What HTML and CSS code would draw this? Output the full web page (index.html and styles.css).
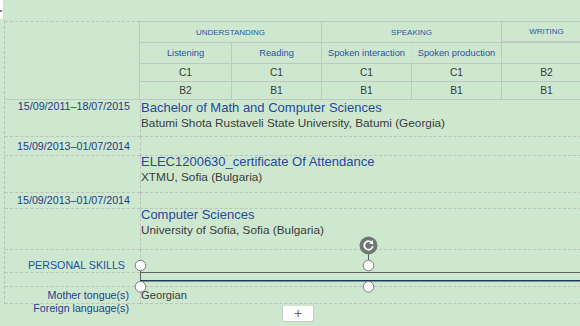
FILE: index.html
```html
<!DOCTYPE html>
<html>
<head>
  <title>Europass CV editor</title>
  <link rel="stylesheet" href="styles.css">
</head>
<body>
  <div class="stub"><span></span></div>

  <div class="cv">
    <div class="left lang-left"></div>
    <div class="lang">
      <div class="lh span2">UNDERSTANDING</div>
      <div class="lh span2">SPEAKING</div>
      <div class="lh writing">WRITING</div>
      <div class="sh">Listening</div>
      <div class="sh">Reading</div>
      <div class="sh soft">Spoken interaction</div>
      <div class="sh">Spoken production</div>
      <div class="sh writing-sub"></div>
      <div class="lv">C1</div><div class="lv">C1</div><div class="lv">C1</div><div class="lv">C1</div><div class="lv">B2</div>
      <div class="lv">B2</div><div class="lv">B1</div><div class="lv">B1</div><div class="lv">B1</div><div class="lv">B1</div>
    </div>

    <div class="left row-b"><div class="date">15/09/2011–18/07/2015</div></div>
    <div class="right row-b">
      <div class="title">Bachelor of Math and Computer Sciences</div>
      <div class="sub">Batumi Shota Rustaveli State University, Batumi (Georgia)</div>
    </div>

    <div class="left row-c"><div class="date">15/09/2013–01/07/2014</div></div>
    <div class="right row-c"></div>

    <div class="left row-d"></div>
    <div class="right row-d">
      <div class="title up">ELEC1200630_certificate Of Attendance</div>
      <div class="sub">XTMU, Sofia (Bulgaria)</div>
    </div>

    <div class="left row-e"><div class="date">15/09/2013–01/07/2014</div></div>
    <div class="right row-e"></div>

    <div class="left row-f"></div>
    <div class="right row-f">
      <div class="title up">Computer Sciences</div>
      <div class="sub">University of Sofia, Sofia (Bulgaria)</div>
    </div>

    <div class="left row-g"><div class="section">PERSONAL SKILLS</div></div>
    <div class="right row-g no-line"></div>

    <div class="left row-h"></div>
    <div class="right row-h"></div>

    <div class="left row-i"><div class="label">Mother tongue(s)</div></div>
    <div class="right row-i"><div class="value">Georgian</div></div>
  </div>

  <div class="after">
    <div class="label foreign">Foreign language(s)</div>
    <div><button class="add">+</button></div>
  </div>

  <svg class="selection" width="580" height="326" viewBox="0 0 580 326">
    <line x1="140" y1="272.5" x2="580" y2="272.5" stroke="#5e625e" stroke-width="1"/>
    <line x1="140.5" y1="265" x2="140.5" y2="281" stroke="#5e625e" stroke-width="1"/>
    <line x1="140" y1="280.7" x2="580" y2="280.7" stroke="#1d3a5c" stroke-width="1.4"/>
    <line x1="368.5" y1="254" x2="368.5" y2="261" stroke="#5e625e" stroke-width="1"/>
    <circle cx="368.5" cy="245.5" r="9" fill="#6f7870"/>
    <path d="M371.6 242.4 A4.3 4.3 0 1 0 372.8 246.2" fill="none" stroke="#fff" stroke-width="1.8"/>
    <polygon points="373.4,244.4 372.6,240 369.2,243.2" fill="#fff"/>
    <circle cx="140.5" cy="265.5" r="5.3" fill="#fff" stroke="#7a7a7a"/>
    <circle cx="368.5" cy="265.5" r="5.3" fill="#fff" stroke="#7a7a7a"/>
    <circle cx="140.5" cy="286.8" r="5.3" fill="#fff" stroke="#7a7a7a"/>
    <circle cx="368.5" cy="286.8" r="5.3" fill="#fff" stroke="#7a7a7a"/>
  </svg>
</body>
</html>
```

FILE: styles.css
```css
html, body { margin: 0; padding: 0; }
body { width: 580px; height: 326px; overflow: hidden; background: #cee8cf; font-family: "Liberation Sans", Arial, sans-serif; color: #3a3a3a; position: relative; }

.stub { position: absolute; left: 0; top: 0; width: 3px; height: 19px; background: #fff; border-radius: 0 2px 2px 0; }
.stub span { position: absolute; left: 0; top: 10px; width: 2px; height: 2px; background: #777; }

.cv { margin: 21px 0 0 4px; width: 586px; display: grid; grid-template-columns: 135px 451px; border-left: 1px dashed #b9c2b9; }

.left { border-bottom: 1px dashed #bcc3bc; }
.right { border-left: 1px dashed #bcc3bc; border-bottom: 1px dashed #bcc3bc; }
.no-line { border-bottom-color: transparent; }

.lang-left { border-top: 1px dashed #bcc3bc; border-bottom: 1px solid #c2c6c2; height: 77px; }

.lang { display: grid; grid-template-columns: 92px 90px 90px 90px 90px; width: 452px; border-top: 1px solid #c2c6c2; border-left: 1px solid #c2c6c2; margin-left: -1px; }
.lang > div { border-right: 1px solid #c2c6c2; border-bottom: 1px solid #c2c6c2; display: flex; align-items: center; justify-content: center; white-space: nowrap; }
.lh { height: 20px; font-size: 8px; color: #2c57a6; }
.span2 { grid-column: span 2; }
.lang > .writing { border-bottom-width: 2px; height: 19px; }
.sh { height: 20px; font-size: 9.3px; color: #2a4f9f; }
.lang > .writing-sub { height: 20px; }
.lang > .soft { border-right-color: #d2d8d2; }
.lv { height: 17px; font-size: 10.3px; color: #3a3a3a; }

.date { font-size: 10.7px; line-height: 12px; color: #1f3a8a; text-align: right; padding-right: 10px; }
.title { font-size: 13px; line-height: 15px; color: #26479e; white-space: nowrap; }
.title.up { margin-top: -2px; }
.sub { font-size: 11.8px; line-height: 16px; color: #3a3a3a; white-space: nowrap; }
.section { font-size: 10.7px; line-height: 13px; color: #2050a0; text-align: right; padding-right: 15px; padding-top: 9px; }
.label { font-size: 10.7px; line-height: 13px; color: #1f3f92; text-align: right; padding-right: 11px; }
.value { font-size: 11.2px; line-height: 13px; color: #3a3a3a; padding-top: 2px; }

.row-b { height: 36px; }
.row-c { height: 18px; }
.row-c .date { padding-top: 3px; }
.row-d { height: 36px; }
.row-e { height: 15px; }
.row-e .date { padding-top: 1px; }
.row-f { height: 40px; }
.row-g { height: 22px; }
.row-h { height: 13px; }
.row-i { height: 16px; }
.row-i .label { padding-top: 2px; }

.after { margin-left: 4px; display: grid; grid-template-columns: 136px 1fr; }
.foreign { margin-top: -2px; }
.add { margin-left: 142px; width: 32px; height: 16px; padding: 0; background: #fff; border: 1px solid #c9cdc9; border-top: none; border-radius: 0 0 3px 3px; color: #666; font-family: "Liberation Sans", Arial, sans-serif; font-size: 14px; line-height: 14px; }

.selection { position: absolute; left: 0; top: 0; pointer-events: none; }
```
